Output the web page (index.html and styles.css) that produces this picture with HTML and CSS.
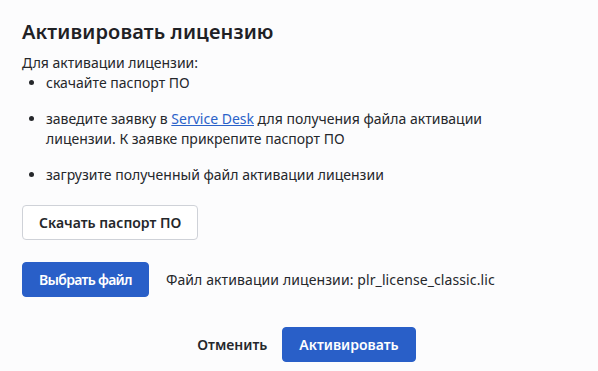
FILE: index.html
```html
<!DOCTYPE html>
<html lang="ru">
<head>
<meta charset="utf-8">
<title>Активировать лицензию</title>
<link rel="stylesheet" href="styles.css">
</head>
<body>
<div class="dialog">
  <h1 class="title">Активировать лицензию</h1>
  <div class="content">
    <p class="intro">Для активации лицензии:</p>
    <ul class="steps">
      <li>скачайте паспорт ПО</li>
      <li>заведите заявку в <a class="link" href="#">Service Desk</a> для получения файла активации лицензии. К заявке прикрепите паспорт ПО</li>
      <li>загрузите полученный файл активации лицензии</li>
    </ul>
  </div>
  <div class="row row-download">
    <button class="btn btn-outline">Скачать паспорт ПО</button>
  </div>
  <div class="row row-file">
    <button class="btn btn-primary btn-narrow">Выбрать файл</button>
    <span class="file-name">Файл активации лицензии: plr_license_classic.lic</span>
  </div>
  <div class="footer">
    <button class="btn btn-text">Отменить</button>
    <button class="btn btn-primary">Активировать</button>
  </div>
</div>
</body>
</html>
```
FILE: styles.css
```css
html, body {
  margin: 0;
  padding: 0;
  background: #fcfcfd;
}
body {
  font-family: "Noto Sans", "Open Sans", sans-serif;
  font-size: 14px;
  line-height: 20px;
  color: #25272b;
}
.dialog {
  width: 598px;
  box-sizing: border-box;
  padding: 18px 22px 8px;
}
.title {
  margin: 0 0 7px;
  font-size: 20px;
  line-height: 28px;
  font-weight: 600;
  letter-spacing: 0.12px;
  color: #1f2125;
}
.content {
  width: 510px;
}
.intro {
  margin: 0;
}
.steps {
  margin: 0;
  padding-left: 24px;
}
.steps li + li {
  margin-top: 16px;
}
.link {
  color: #2a62c9;
  text-decoration: underline;
}
.row {
  display: flex;
  align-items: center;
}
.row-download {
  margin-top: 20px;
}
.row-file {
  margin-top: 22px;
  gap: 17px;
}
.btn {
  font-family: inherit;
  font-size: 14px;
  line-height: 20px;
  font-weight: 600;
  height: 35px;
  padding: 0 16px;
  border-radius: 4px;
  border: 1px solid transparent;
  box-sizing: border-box;
  cursor: pointer;
}
.btn-outline {
  background: #ffffff;
  border-color: #cfd2d8;
  color: #25272b;
}
.btn-primary {
  background: #295fc8;
  border-color: #295fc8;
  color: #ffffff;
}
.btn-narrow {
  letter-spacing: -0.7px;
}
.btn-text {
  background: transparent;
  color: #25272b;
  padding: 0 14px;
}
.file-name {
  color: #25272b;
  letter-spacing: 0.1px;
}
.footer {
  margin-top: 30px;
  display: flex;
  justify-content: center;
  margin-left: -22px;
  margin-right: -22px;
}
```
